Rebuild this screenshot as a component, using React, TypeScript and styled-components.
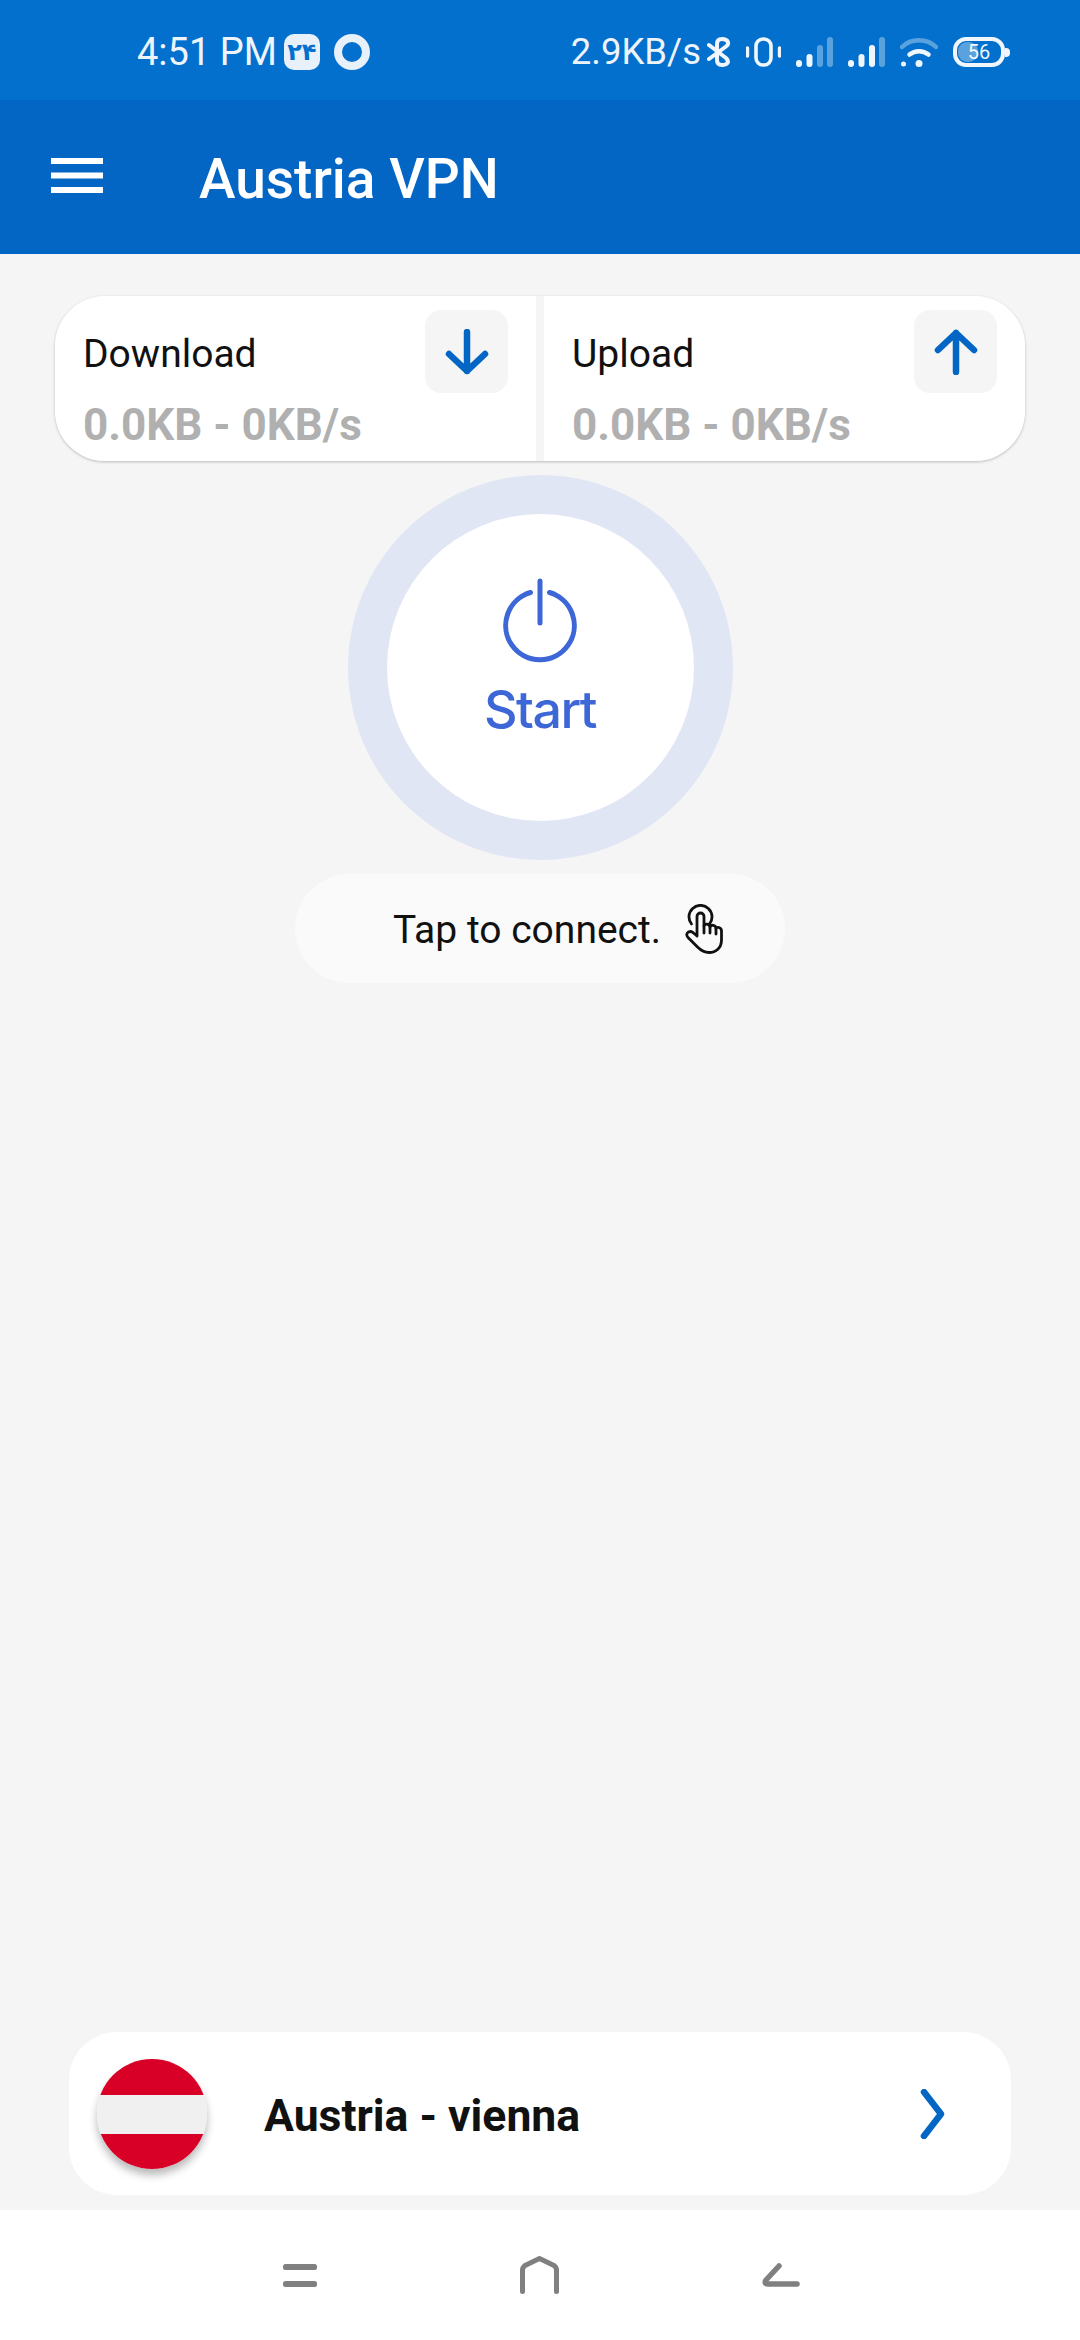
import React from "react";
import styled, { createGlobalStyle } from "styled-components";

const GlobalStyle = createGlobalStyle`
  html, body {
    margin: 0;
    padding: 0;
    background: #f5f5f5;
  }
  * {
    box-sizing: border-box;
  }
`;

const SignalIcon = ({ solid }: { solid: number }) => {
  const bars = [
    { x: 0, h: 7 },
    { x: 10.5, h: 13 },
    { x: 21, h: 22 },
    { x: 31, h: 30 },
  ];
  return (
    <svg width="37" height="30" viewBox="0 0 37 30">
      {bars.map((bar, i) => (
        <rect
          key={bar.x}
          x={bar.x}
          y={30 - bar.h}
          width="6"
          height={bar.h}
          rx="3"
          fill={i < solid ? "#f1f6fc" : "rgba(255,255,255,0.35)"}
        />
      ))}
    </svg>
  );
};

const App = () => {
  return (
    <Page>
      <GlobalStyle />
      <StatusBar>
        <StatusLeft>
          <Time>4:51 PM</Time>
          <DateBadge>۲۴</DateBadge>
          <StatusRing />
        </StatusLeft>
        <StatusRight>
          <Speed>2.9KB/s</Speed>
          <svg width="24" height="30" viewBox="0 0 24 30" fill="none" stroke="#f1f6fc" strokeWidth="4" strokeLinecap="round" strokeLinejoin="round">
            <path d="M2 8 L19 21 C23 25 20 28.2 15 28 C11 28 10 26 10 23 V7 C10 3.5 11.5 2 15 2 C21 2 23 6.5 19 9.5 L2 22" />
          </svg>
          <svg width="35" height="30" viewBox="0 0 35 30" fill="none" stroke="#f1f6fc" strokeLinecap="round">
            <rect x="10" y="2" width="15" height="26" rx="7" strokeWidth="3.6" />
            <path d="M1.5 11 V19 M33.5 11 V19" strokeWidth="3.4" />
          </svg>
          <SignalIcon solid={2} />
          <SignalIcon solid={3} />
          <svg width="38" height="30" viewBox="0 0 38 30" fill="none" strokeLinecap="round">
            <path d="M2 10 C11 1 27 1 36 10" stroke="rgba(255,255,255,0.35)" strokeWidth="4.5" />
            <path d="M9.5 17.5 C15 13 23 13 28.5 17.5" stroke="#f1f6fc" strokeWidth="4.5" />
            <circle cx="19" cy="26.5" r="3.5" fill="#f1f6fc" />
            <circle cx="3.5" cy="27" r="2.5" fill="#f1f6fc" />
          </svg>
          <Battery>56</Battery>
        </StatusRight>
      </StatusBar>

      <AppBar>
        <svg width="52" height="35" viewBox="0 0 52 35" fill="#fff">
          <rect y="0" width="52" height="6" />
          <rect y="14.5" width="52" height="6" />
          <rect y="29" width="52" height="6" />
        </svg>
        <Title>Austria VPN</Title>
      </AppBar>

      <Main>
        <StatsCard>
          <StatPanel>
            <StatTop>
              <StatLabel>Download</StatLabel>
              <ArrowBox>
                <svg width="44" height="46" viewBox="0 0 44 46" fill="none" stroke="#0366c4" strokeWidth="6.5" strokeLinecap="round" strokeLinejoin="round">
                  <path d="M22 3 V42 M4 25 L22 42 L40 25" />
                </svg>
              </ArrowBox>
            </StatTop>
            <StatValue>0.0KB - 0KB/s</StatValue>
          </StatPanel>
          <StatPanel>
            <StatTop>
              <StatLabel>Upload</StatLabel>
              <ArrowBox>
                <svg width="44" height="46" viewBox="0 0 44 46" fill="none" stroke="#0366c4" strokeWidth="6.5" strokeLinecap="round" strokeLinejoin="round">
                  <path d="M22 43 V4 M4 21 L22 4 L40 21" />
                </svg>
              </ArrowBox>
            </StatTop>
            <StatValue>0.0KB - 0KB/s</StatValue>
          </StatPanel>
        </StatsCard>

        <PowerRing>
          <PowerButton>
            <svg width="78" height="88" viewBox="0 0 78 88" fill="none" stroke="#3d66d6" strokeWidth="5" strokeLinecap="round">
              <path d="M39 3 V45" />
              <path d="M29.5 14.5 A34.3 34.3 0 1 0 48.5 14.5" />
            </svg>
            <StartLabel>Start</StartLabel>
          </PowerButton>
        </PowerRing>

        <HintPill>
          <HintText>Tap to connect.</HintText>
          <svg width="38" height="50" viewBox="0 0 38 50" fill="none" stroke="#111" strokeWidth="2.8" strokeLinecap="round" strokeLinejoin="round">
            <path d="M6.5 20 A11.5 11.5 0 1 1 24.5 20" />
            <path d="M12 32 V12.5 A3.5 3.5 0 0 1 19 12.5 V22 C19.5 19.5 25 19.5 25 23 C25.5 20.5 31 20.5 31 24.5 C31.5 22.5 36.5 23 36.5 27 V36 C36.5 44 31 48.5 24 48.5 C19 48.5 15.5 46 12.5 43 L3 33.5 C1 31.5 1.5 29 3.5 28 C5.5 27 7 27.5 8.5 29 L12 32" />
            <path d="M19 22 V29 M25 23 V29 M31 24.5 V30" />
          </svg>
        </HintPill>

        <CountryCard>
          <Flag />
          <CountryName>Austria - vienna</CountryName>
          <ChevronWrap>
            <svg width="26" height="50" viewBox="0 0 26 50" fill="none" stroke="#0366c4" strokeWidth="6.5" strokeLinecap="round" strokeLinejoin="round">
              <path d="M4 3 L21 25 L4 47" />
            </svg>
          </ChevronWrap>
        </CountryCard>
      </Main>

      <NavBar>
        <svg width="34" height="23" viewBox="0 0 34 23" fill="#808080">
          <rect y="0" width="34" height="6" rx="2.5" />
          <rect y="17" width="34" height="6" rx="2.5" />
        </svg>
        <svg width="39" height="38" viewBox="0 0 39 38" fill="none" stroke="#808080" strokeWidth="5" strokeLinecap="round" strokeLinejoin="round">
          <path d="M2.5 35.5 V14 C2.5 12 3 11 5 9.5 L19.5 2.5 L34 9.5 C36 11 36.5 12 36.5 14 V35.5" />
        </svg>
        <svg width="38" height="24" viewBox="0 0 38 24" fill="none" stroke="#808080" strokeWidth="5.5" strokeLinecap="round" strokeLinejoin="round">
          <path d="M17 3 L4 17 C2.5 19.5 3 21 6 21 H35" />
        </svg>
      </NavBar>
    </Page>
  );
};

const Page = styled.div`
  width: 1080px;
  height: 2340px;
  display: flex;
  flex-direction: column;
  background: #f5f5f5;
  font-family: Roboto, "Noto Sans", sans-serif;
  overflow: hidden;
`;

const StatusBar = styled.div`
  height: 100px;
  padding: 4px 70px 0 137px;
  display: flex;
  align-items: center;
  justify-content: space-between;
  background: #0270cc;
  color: #eef4fb;
`;

const StatusLeft = styled.div`
  display: flex;
  align-items: center;
`;

const Time = styled.div`
  font-size: 38px;
  line-height: 44px;
`;

const DateBadge = styled.div`
  width: 36px;
  height: 36px;
  margin-left: 7px;
  display: flex;
  align-items: center;
  justify-content: center;
  border-radius: 10px;
  background: #e8f0fa;
  color: #0270cc;
  font-family: "DejaVu Sans", sans-serif;
  font-size: 24px;
  font-weight: 700;
`;

const StatusRing = styled.div`
  width: 36px;
  height: 36px;
  margin-left: 14px;
  border: 8px solid #e8f0fa;
  border-radius: 50%;
`;

const StatusRight = styled.div`
  display: flex;
  align-items: center;
  gap: 15px;
`;

const Speed = styled.div`
  margin-right: -9px;
  font-size: 36.5px;
  line-height: 44px;
`;

const Battery = styled.div`
  position: relative;
  width: 52px;
  height: 30px;
  margin-right: 5px;
  display: flex;
  align-items: center;
  justify-content: center;
  border: 4px solid #f1f6fc;
  border-radius: 13px;
  font-size: 20px;
  color: #f1f6fc;

  &::before {
    content: "";
    position: absolute;
    left: 1px;
    top: 1px;
    bottom: 1px;
    width: 20px;
    border-radius: 9px;
    background: rgba(255, 255, 255, 0.35);
  }

  &::after {
    content: "";
    position: absolute;
    right: -9px;
    top: 7px;
    width: 5px;
    height: 9px;
    border-radius: 0 4px 4px 0;
    background: #f1f6fc;
  }
`;

const AppBar = styled.div`
  height: 154px;
  padding: 0 0 4px 51px;
  display: flex;
  align-items: center;
  gap: 96px;
  background: #0366c4;
`;

const Title = styled.div`
  padding-top: 8px;
  font-size: 55px;
  font-weight: 500;
  color: #fff;
`;

const Main = styled.div`
  flex: 1;
  padding-top: 42px;
  display: flex;
  flex-direction: column;
  align-items: center;
`;

const StatsCard = styled.div`
  width: 970px;
  height: 165px;
  display: grid;
  grid-template-columns: 1fr 1fr;
  gap: 8px;
  border-radius: 50px;
  box-shadow: 0 1px 3px rgba(0, 0, 0, 0.24);
  overflow: hidden;
`;

const StatPanel = styled.div`
  padding: 14px 28px 0 28px;
  background: #fff;
`;

const StatTop = styled.div`
  display: flex;
  align-items: center;
  justify-content: space-between;
`;

const StatLabel = styled.div`
  padding-top: 5px;
  font-size: 39px;
  color: #111;
`;

const ArrowBox = styled.div`
  width: 83px;
  height: 83px;
  display: flex;
  align-items: center;
  justify-content: center;
  border-radius: 16px;
  background: #f5f5f5;
`;

const StatValue = styled.div`
  margin-top: 8px;
  font-size: 44px;
  line-height: 48px;
  font-weight: 700;
  color: #b0b0b0;
`;

const PowerRing = styled.div`
  width: 385px;
  height: 385px;
  margin-top: 14px;
  display: flex;
  align-items: center;
  justify-content: center;
  border-radius: 50%;
  background: #e0e6f3;
`;

const PowerButton = styled.div`
  width: 307px;
  height: 307px;
  padding-top: 64px;
  display: flex;
  flex-direction: column;
  align-items: center;
  border-radius: 50%;
  background: #fff;
`;

const StartLabel = styled.div`
  margin-top: 14px;
  font-family: Inter, Roboto, sans-serif;
  font-size: 52px;
  line-height: 60px;
  letter-spacing: -1.6px;
  font-weight: 500;
  color: #3d66d6;
`;

const HintPill = styled.div`
  width: 490px;
  height: 109px;
  margin-top: 14px;
  padding-left: 98px;
  display: flex;
  align-items: center;
  gap: 24px;
  border-radius: 55px;
  background: #fafafa;
`;

const HintText = styled.div`
  padding-top: 3px;
  font-size: 39px;
  color: #111;
`;

const CountryCard = styled.div`
  width: 942px;
  height: 163px;
  margin-top: auto;
  margin-bottom: 15px;
  padding: 0 65px 0 28px;
  display: flex;
  align-items: center;
  border-radius: 48px;
  background: #fff;
`;

const Flag = styled.div`
  width: 110px;
  height: 110px;
  flex: none;
  border-radius: 50%;
  background: linear-gradient(#d80027 33%, #f0f0f0 33%, #f0f0f0 68%, #d80027 68%);
  box-shadow: 0 6px 8px rgba(0, 0, 0, 0.28);
`;

const CountryName = styled.div`
  margin-left: 57px;
  padding-top: 5px;
  font-size: 44.5px;
  font-weight: 700;
  color: #111;
`;

const ChevronWrap = styled.div`
  margin-left: auto;
  display: flex;
`;

const NavBar = styled.div`
  height: 130px;
  padding-left: 2px;
  display: flex;
  align-items: center;
  justify-content: center;
  gap: 203px;
  background: #fff;
`;

export default App;
